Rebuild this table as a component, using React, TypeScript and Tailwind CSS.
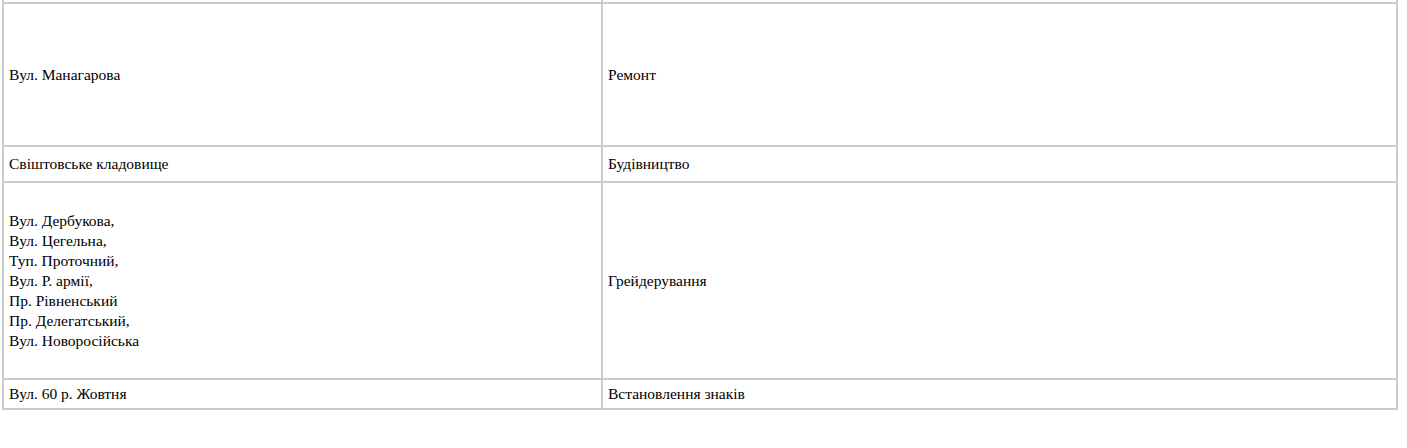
const rows = [
  { left: ["Вул. Манагарова"], right: "Ремонт", h: "h-[143px]" },
  { left: ["Свiштовське кладовище"], right: "Будівництво", h: "h-[36px]" },
  {
    left: [
      "Вул. Дербукова,",
      "Вул. Цегельна,",
      "Туп. Проточний,",
      "Вул. Р. армії,",
      "Пр. Рівненський",
      "Пр. Делегатський,",
      "Вул. Новоросійська",
    ],
    right: "Грейдерування",
    h: "h-[197px]",
  },
  { left: ["Вул. 60 р. Жовтня"], right: "Встановлення знаків", h: "h-[30px]" },
]

export default function App() {
  return (
    <div className="bg-white min-h-[448px] pl-[2px] text-[15.5px] leading-[20px] text-black font-['Liberation_Serif',serif]">
      <table className="w-[1396px] border-collapse border-2 border-t-0 border-[#cccccc]">
        <tbody>
          {/* tail of the previous row, cut off by the page top */}
          <tr className="h-[3px]">
            <td className="w-[599px] border-2 border-t-0 border-[#cccccc] p-0"></td>
            <td className="border-2 border-t-0 border-[#cccccc] p-0"></td>
          </tr>
          {rows.map((r, i) => (
            <tr key={i} className={r.h}>
              <td className="border-2 border-[#cccccc] px-[5px] py-0 align-middle">
                {r.left.map((l) => (
                  <div key={l}>{l}</div>
                ))}
              </td>
              <td className="border-2 border-[#cccccc] px-[5px] py-0 align-middle">{r.right}</td>
            </tr>
          ))}
        </tbody>
      </table>
    </div>
  )
}
